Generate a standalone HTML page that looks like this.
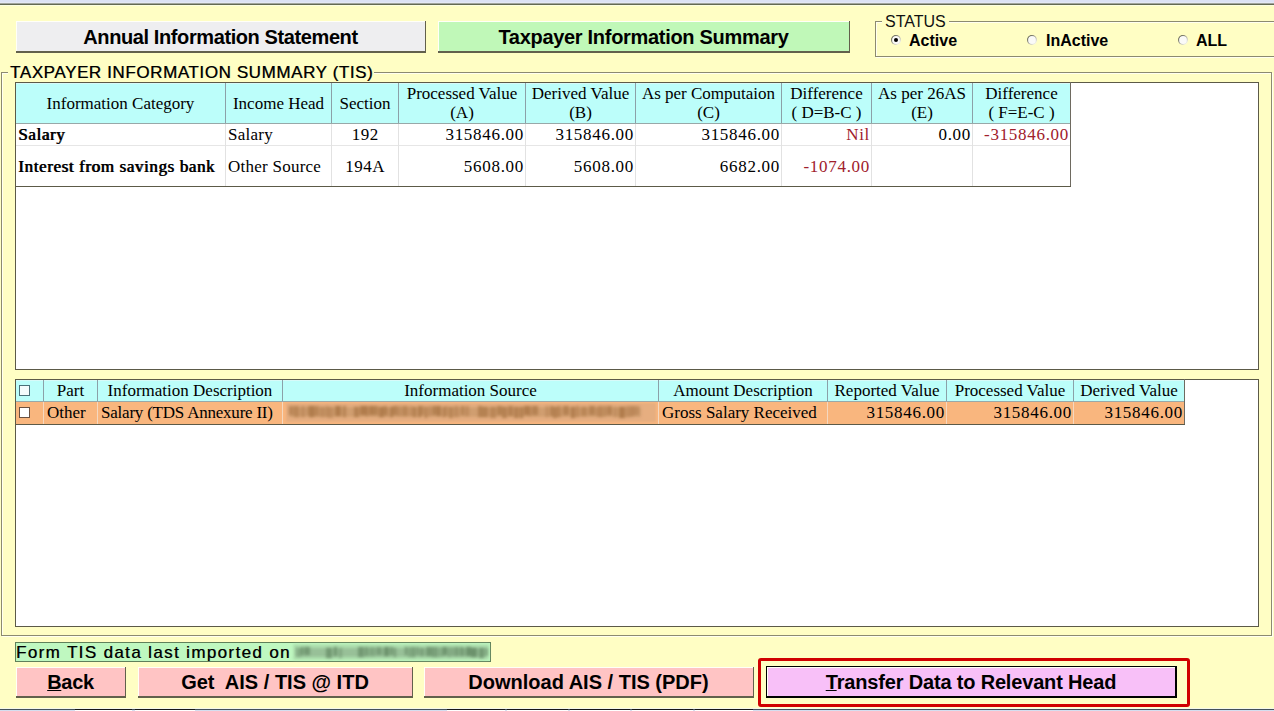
<!DOCTYPE html>
<html><head><meta charset="utf-8">
<style>
*{margin:0;padding:0;box-sizing:border-box}
html,body{width:1274px;height:711px;overflow:hidden;background:#FFFEC4;font-family:"Liberation Sans",sans-serif;color:#000;position:relative}
.a{position:absolute}
.topstrip{left:0;top:0;width:1274px;height:5px;background:linear-gradient(#DCE2F4 0,#DCE2F4 2px,#E4E8F4 2px,#E4E8F4 3px,#A0A49C 3px,#A0A49C 4px,#646A52 4px,#646A52 5px)}
.btn{font-weight:bold;text-align:center;white-space:nowrap;border-right:1px solid #62604C;border-bottom:2px solid #62604C;box-shadow:inset 1px 1px 0 #FFFFF8}
.serif{font-family:"Liberation Serif",serif;font-size:17px}
.c{text-align:center;white-space:nowrap}
.rt{text-align:right;white-space:nowrap}
.gb{border:1px solid #8C8A70;box-shadow:1px 1px 0 #FFFFF0, inset 1px 1px 0 #FFFFF0}
.panel{background:#fff;border:1px solid #5C5A48;}
.hdr{background:#BCFEFA;box-shadow:inset 0 1px 0 #D8FAF8}
.vl{position:absolute;width:1px}
.hl{position:absolute;height:1px}
.t{position:absolute;white-space:nowrap;line-height:1}
u{text-decoration-thickness:1px;text-underline-offset:1px}

</style></head><body>
<div class="a topstrip"></div>
<div class="a" style="left:0;top:5px;width:1274px;height:1px;background:#FCFEE2"></div>
<div class="a btn" style="left:16px;top:21px;width:410px;height:32px;background:#EEEEF0;font-size:20px;letter-spacing:-0.4px;line-height:33px;">Annual Information Statement</div>
<div class="a btn" style="left:438px;top:21px;width:412px;height:32px;background:#C0F8B8;font-size:20px;letter-spacing:-0.3px;line-height:33px;">Taxpayer Information Summary</div>
<div class="a gb" style="left:875px;top:21px;width:420px;height:36px;"></div>
<div class="a t" style="left:882px;top:14px;background:#FFFEC4;padding:0 3px;font-size:16px;color:#111">STATUS</div>
<svg class="a" style="left:890px;top:34px" width="12" height="12" viewBox="0 0 12 12"><defs><linearGradient id="rg896" x1="0" y1="0" x2="1" y2="1"><stop offset="0.15" stop-color="#5C5C4C"/><stop offset="0.85" stop-color="#F4F4EC"/></linearGradient></defs><circle cx="6" cy="6" r="5" fill="url(#rg896)"/><circle cx="6" cy="6" r="3.9" fill="#FAFAF8"/><circle cx="6" cy="6" r="2" fill="#000"/></svg><div class="a t" style="left:909px;top:33px;font-size:16px;font-weight:bold">Active</div>
<svg class="a" style="left:1026px;top:34px" width="12" height="12" viewBox="0 0 12 12"><defs><linearGradient id="rg1032" x1="0" y1="0" x2="1" y2="1"><stop offset="0.15" stop-color="#5C5C4C"/><stop offset="0.85" stop-color="#F4F4EC"/></linearGradient></defs><circle cx="6" cy="6" r="5" fill="url(#rg1032)"/><circle cx="6" cy="6" r="3.9" fill="#FAFAF8"/></svg><div class="a t" style="left:1046px;top:33px;font-size:16px;font-weight:bold">InActive</div>
<svg class="a" style="left:1177px;top:34px" width="12" height="12" viewBox="0 0 12 12"><defs><linearGradient id="rg1183" x1="0" y1="0" x2="1" y2="1"><stop offset="0.15" stop-color="#5C5C4C"/><stop offset="0.85" stop-color="#F4F4EC"/></linearGradient></defs><circle cx="6" cy="6" r="5" fill="url(#rg1183)"/><circle cx="6" cy="6" r="3.9" fill="#FAFAF8"/></svg><div class="a t" style="left:1196px;top:33px;font-size:16px;font-weight:bold">ALL</div>
<div class="a gb" style="left:1px;top:72px;width:1271px;height:564px;"></div>
<div class="a t" style="left:8px;top:64px;background:#FFFEC4;padding:0 1px 0 2px;font-size:17px;letter-spacing:0.6px;text-shadow:0.5px 0 0 rgba(0,0,0,.6)">TAXPAYER INFORMATION SUMMARY (TIS)</div>
<div class="a panel" style="left:15px;top:82px;width:1244px;height:288px;"></div>
<div class="a hdr" style="left:16px;top:83px;width:1054px;height:40px"></div>
<div class="hl" style="left:16px;top:123px;width:1054px;background:#98A8A8"></div>
<div class="hl" style="left:16px;top:145px;width:1054px;background:#E6E6E6"></div>
<div class="vl" style="left:225px;top:83px;height:40px;background:#8CA0A8"></div><div class="vl" style="left:225px;top:124px;height:62px;background:#E2E2E2"></div>
<div class="vl" style="left:331px;top:83px;height:40px;background:#8CA0A8"></div><div class="vl" style="left:331px;top:124px;height:62px;background:#E2E2E2"></div>
<div class="vl" style="left:398px;top:83px;height:40px;background:#8CA0A8"></div><div class="vl" style="left:398px;top:124px;height:62px;background:#E2E2E2"></div>
<div class="vl" style="left:525px;top:83px;height:40px;background:#8CA0A8"></div><div class="vl" style="left:525px;top:124px;height:62px;background:#E2E2E2"></div>
<div class="vl" style="left:635px;top:83px;height:40px;background:#8CA0A8"></div><div class="vl" style="left:635px;top:124px;height:62px;background:#E2E2E2"></div>
<div class="vl" style="left:781px;top:83px;height:40px;background:#8CA0A8"></div><div class="vl" style="left:781px;top:124px;height:62px;background:#E2E2E2"></div>
<div class="vl" style="left:871px;top:83px;height:40px;background:#8CA0A8"></div><div class="vl" style="left:871px;top:124px;height:62px;background:#E2E2E2"></div>
<div class="vl" style="left:972px;top:83px;height:40px;background:#8CA0A8"></div><div class="vl" style="left:972px;top:124px;height:62px;background:#E2E2E2"></div>
<div class="vl" style="left:1070px;top:82px;height:105px;background:#6E6A60"></div>
<div class="hl" style="left:15px;top:186px;width:1056px;background:#5C5A48"></div>
<div class="a serif c" style="left:16px;top:94px;width:209px;height:19px;line-height:19px">Information Category</div>
<div class="a serif c" style="left:226px;top:94px;width:105px;height:19px;line-height:19px">Income Head</div>
<div class="a serif c" style="left:332px;top:94px;width:66px;height:19px;line-height:19px">Section</div>
<div class="a serif c" style="left:399px;top:84px;width:126px;height:19px;line-height:19px">Processed Value</div>
<div class="a serif c" style="left:399px;top:103px;width:126px;height:19px;line-height:19px">(A)</div>
<div class="a serif c" style="left:526px;top:84px;width:109px;height:19px;line-height:19px">Derived Value</div>
<div class="a serif c" style="left:526px;top:103px;width:109px;height:19px;line-height:19px">(B)</div>
<div class="a serif c" style="left:636px;top:84px;width:145px;height:19px;line-height:19px">As per Computaion</div>
<div class="a serif c" style="left:636px;top:103px;width:145px;height:19px;line-height:19px">(C)</div>
<div class="a serif c" style="left:782px;top:84px;width:89px;height:19px;line-height:19px">Difference</div>
<div class="a serif c" style="left:782px;top:103px;width:89px;height:19px;line-height:19px">( D=B-C )</div>
<div class="a serif c" style="left:872px;top:84px;width:100px;height:19px;line-height:19px">As per 26AS</div>
<div class="a serif c" style="left:872px;top:103px;width:100px;height:19px;line-height:19px">(E)</div>
<div class="a serif c" style="left:973px;top:84px;width:97px;height:19px;line-height:19px">Difference</div>
<div class="a serif c" style="left:973px;top:103px;width:97px;height:19px;line-height:19px">( F=E-C )</div>
<div class="a serif" style="left:18px;top:125px;height:19px;line-height:19px;white-space:nowrap;letter-spacing:0.62px;text-shadow:0.8px 0 0 #000;">Salary</div>
<div class="a serif" style="left:228px;top:125px;height:19px;line-height:19px;white-space:nowrap;letter-spacing:0.25px;">Salary</div>
<div class="a serif c" style="left:332px;top:125px;width:66px;height:19px;line-height:19px;letter-spacing:0.5px;text-indent:0.5px;">192</div>
<div class="a serif rt" style="left:398px;top:125px;width:126px;height:19px;line-height:19px;letter-spacing:0.7px;">315846.00</div>
<div class="a serif rt" style="left:525px;top:125px;width:109px;height:19px;line-height:19px;letter-spacing:0.7px;">315846.00</div>
<div class="a serif rt" style="left:635px;top:125px;width:145px;height:19px;line-height:19px;letter-spacing:0.7px;">315846.00</div>
<div class="a serif rt" style="left:781px;top:125px;width:89px;height:19px;line-height:19px;letter-spacing:0.7px;color:#A0202C;">Nil</div>
<div class="a serif rt" style="left:871px;top:125px;width:100px;height:19px;line-height:19px;letter-spacing:0.7px;">0.00</div>
<div class="a serif rt" style="left:972px;top:125px;width:97px;height:19px;line-height:19px;letter-spacing:0.7px;color:#A0202C;">-315846.00</div>
<div class="a serif" style="left:18px;top:157px;height:19px;line-height:19px;white-space:nowrap;letter-spacing:0.62px;text-shadow:0.8px 0 0 #000;">Interest from savings bank</div>
<div class="a serif" style="left:228px;top:157px;height:19px;line-height:19px;white-space:nowrap;letter-spacing:0.25px;">Other Source</div>
<div class="a serif c" style="left:332px;top:157px;width:66px;height:19px;line-height:19px;letter-spacing:0.5px;text-indent:0.5px;">194A</div>
<div class="a serif rt" style="left:398px;top:157px;width:126px;height:19px;line-height:19px;letter-spacing:0.7px;">5608.00</div>
<div class="a serif rt" style="left:525px;top:157px;width:109px;height:19px;line-height:19px;letter-spacing:0.7px;">5608.00</div>
<div class="a serif rt" style="left:635px;top:157px;width:145px;height:19px;line-height:19px;letter-spacing:0.7px;">6682.00</div>
<div class="a serif rt" style="left:781px;top:157px;width:89px;height:19px;line-height:19px;letter-spacing:0.7px;color:#A0202C;">-1074.00</div>
<div class="a panel" style="left:15px;top:379px;width:1244px;height:248px;"></div>
<div class="a hdr" style="left:16px;top:380px;width:1168px;height:21px"></div>
<div class="hl" style="left:16px;top:401px;width:1168px;background:#98A8A8"></div>
<div class="a" style="left:16px;top:402px;width:1168px;height:22px;background:#F9B67E"></div>
<div class="vl" style="left:43px;top:380px;height:21px;background:#8CA0A8"></div><div class="vl" style="left:43px;top:402px;height:22px;background:#F4D8C0"></div>
<div class="vl" style="left:97px;top:380px;height:21px;background:#8CA0A8"></div><div class="vl" style="left:97px;top:402px;height:22px;background:#F4D8C0"></div>
<div class="vl" style="left:282px;top:380px;height:21px;background:#8CA0A8"></div><div class="vl" style="left:282px;top:402px;height:22px;background:#F4D8C0"></div>
<div class="vl" style="left:658px;top:380px;height:21px;background:#8CA0A8"></div><div class="vl" style="left:658px;top:402px;height:22px;background:#F4D8C0"></div>
<div class="vl" style="left:827px;top:380px;height:21px;background:#8CA0A8"></div><div class="vl" style="left:827px;top:402px;height:22px;background:#F4D8C0"></div>
<div class="vl" style="left:946px;top:380px;height:21px;background:#8CA0A8"></div><div class="vl" style="left:946px;top:402px;height:22px;background:#F4D8C0"></div>
<div class="vl" style="left:1073px;top:380px;height:21px;background:#8CA0A8"></div><div class="vl" style="left:1073px;top:402px;height:22px;background:#F4D8C0"></div>
<div class="vl" style="left:1184px;top:379px;height:46px;background:#6E6A60"></div>
<div class="hl" style="left:15px;top:424px;width:1170px;background:#5C5A48"></div>
<div class="a" style="left:19px;top:385px;width:11px;height:11px;background:#F4FCFC;border:1px solid #4A7078"></div><div class="a" style="left:19px;top:407px;width:11px;height:11px;background:#FFFFFF;border:1px solid #6A5040"></div>
<div class="a serif c" style="left:44px;top:381px;width:53px;height:19px;line-height:19px">Part</div>
<div class="a serif c" style="left:98px;top:381px;width:184px;height:19px;line-height:19px">Information Description</div>
<div class="a serif c" style="left:283px;top:381px;width:375px;height:19px;line-height:19px">Information Source</div>
<div class="a serif c" style="left:659px;top:381px;width:168px;height:19px;line-height:19px">Amount Description</div>
<div class="a serif c" style="left:828px;top:381px;width:118px;height:19px;line-height:19px">Reported Value</div>
<div class="a serif c" style="left:947px;top:381px;width:126px;height:19px;line-height:19px">Processed Value</div>
<div class="a serif c" style="left:1074px;top:381px;width:110px;height:19px;line-height:19px">Derived Value</div>
<div class="a serif" style="left:47px;top:403px;height:19px;line-height:19px;white-space:nowrap">Other</div>
<div class="a serif" style="left:101px;top:403px;height:19px;line-height:19px;white-space:nowrap"><span style="letter-spacing:-0.22px">Salary (TDS Annexure II)</span></div>
<div class="a serif" style="left:662px;top:403px;height:19px;line-height:19px;white-space:nowrap">Gross Salary Received</div>
<div class="a serif rt" style="left:827px;top:403px;width:118px;height:19px;line-height:19px;letter-spacing:0.7px">315846.00</div>
<div class="a serif rt" style="left:946px;top:403px;width:126px;height:19px;line-height:19px;letter-spacing:0.7px">315846.00</div>
<div class="a serif rt" style="left:1073px;top:403px;width:110px;height:19px;line-height:19px;letter-spacing:0.7px">315846.00</div>
<div class="a" style="left:286px;top:403px;width:370px;height:19px;background:#E6AE80;filter:blur(1px)"></div>
<div class="a" style="left:289px;top:407px;width:352px;height:10px;background:#D09E70;filter:blur(1.5px)"></div>
<div class="a" style="left:289px;top:406px;width:352px;height:13px;filter:blur(1.6px)"><i style="position:absolute;left:0px;top:0px;width:3px;height:9px;background:#B07C4C;opacity:0.70"></i><i style="position:absolute;left:3px;top:0px;width:2px;height:9px;background:#B07C4C;opacity:0.55"></i><i style="position:absolute;left:5px;top:0px;width:5px;height:11px;background:#B07C4C;opacity:0.70"></i><i style="position:absolute;left:12px;top:0px;width:4px;height:11px;background:#B07C4C;opacity:0.55"></i><i style="position:absolute;left:18px;top:0px;width:2px;height:9px;background:#B07C4C;opacity:0.55"></i><i style="position:absolute;left:20px;top:0px;width:5px;height:11px;background:#B07C4C;opacity:1.00"></i><i style="position:absolute;left:25px;top:0px;width:5px;height:10px;background:#B07C4C;opacity:0.70"></i><i style="position:absolute;left:31px;top:1px;width:5px;height:10px;background:#B07C4C;opacity:0.55"></i><i style="position:absolute;left:37px;top:0px;width:2px;height:11px;background:#B07C4C;opacity:0.70"></i><i style="position:absolute;left:39px;top:1px;width:5px;height:11px;background:#B07C4C;opacity:0.55"></i><i style="position:absolute;left:46px;top:0px;width:6px;height:10px;background:#B07C4C;opacity:1.00"></i><i style="position:absolute;left:54px;top:0px;width:3px;height:11px;background:#B07C4C;opacity:0.85"></i><i style="position:absolute;left:65px;top:1px;width:5px;height:10px;background:#B07C4C;opacity:0.85"></i><i style="position:absolute;left:71px;top:0px;width:6px;height:9px;background:#B07C4C;opacity:1.00"></i><i style="position:absolute;left:77px;top:0px;width:2px;height:10px;background:#B07C4C;opacity:1.00"></i><i style="position:absolute;left:80px;top:0px;width:4px;height:9px;background:#B07C4C;opacity:1.00"></i><i style="position:absolute;left:84px;top:0px;width:5px;height:9px;background:#B07C4C;opacity:0.85"></i><i style="position:absolute;left:90px;top:1px;width:5px;height:10px;background:#B07C4C;opacity:1.00"></i><i style="position:absolute;left:95px;top:0px;width:2px;height:9px;background:#B07C4C;opacity:0.85"></i><i style="position:absolute;left:97px;top:1px;width:2px;height:9px;background:#B07C4C;opacity:0.85"></i><i style="position:absolute;left:101px;top:1px;width:3px;height:10px;background:#B07C4C;opacity:1.00"></i><i style="position:absolute;left:104px;top:0px;width:4px;height:9px;background:#B07C4C;opacity:0.85"></i><i style="position:absolute;left:108px;top:0px;width:4px;height:10px;background:#B07C4C;opacity:0.55"></i><i style="position:absolute;left:113px;top:0px;width:6px;height:10px;background:#B07C4C;opacity:0.70"></i><i style="position:absolute;left:121px;top:0px;width:2px;height:10px;background:#B07C4C;opacity:0.70"></i><i style="position:absolute;left:124px;top:1px;width:3px;height:10px;background:#B07C4C;opacity:1.00"></i><i style="position:absolute;left:129px;top:0px;width:3px;height:11px;background:#B07C4C;opacity:1.00"></i><i style="position:absolute;left:132px;top:0px;width:3px;height:9px;background:#B07C4C;opacity:0.70"></i><i style="position:absolute;left:136px;top:1px;width:2px;height:11px;background:#B07C4C;opacity:1.00"></i><i style="position:absolute;left:139px;top:0px;width:3px;height:10px;background:#B07C4C;opacity:0.55"></i><i style="position:absolute;left:143px;top:0px;width:5px;height:9px;background:#B07C4C;opacity:0.85"></i><i style="position:absolute;left:148px;top:0px;width:4px;height:10px;background:#B07C4C;opacity:1.00"></i><i style="position:absolute;left:154px;top:1px;width:2px;height:10px;background:#B07C4C;opacity:1.00"></i><i style="position:absolute;left:156px;top:0px;width:3px;height:10px;background:#B07C4C;opacity:0.55"></i><i style="position:absolute;left:160px;top:1px;width:2px;height:11px;background:#B07C4C;opacity:0.85"></i><i style="position:absolute;left:162px;top:1px;width:2px;height:11px;background:#B07C4C;opacity:0.70"></i><i style="position:absolute;left:165px;top:0px;width:5px;height:11px;background:#B07C4C;opacity:0.55"></i><i style="position:absolute;left:172px;top:0px;width:3px;height:9px;background:#B07C4C;opacity:0.85"></i><i style="position:absolute;left:176px;top:0px;width:4px;height:10px;background:#B07C4C;opacity:0.55"></i><i style="position:absolute;left:189px;top:0px;width:4px;height:11px;background:#B07C4C;opacity:0.85"></i><i style="position:absolute;left:193px;top:1px;width:6px;height:10px;background:#B07C4C;opacity:0.85"></i><i style="position:absolute;left:201px;top:1px;width:6px;height:11px;background:#B07C4C;opacity:0.70"></i><i style="position:absolute;left:208px;top:0px;width:5px;height:9px;background:#B07C4C;opacity:0.85"></i><i style="position:absolute;left:213px;top:1px;width:5px;height:11px;background:#B07C4C;opacity:0.85"></i><i style="position:absolute;left:219px;top:0px;width:5px;height:10px;background:#B07C4C;opacity:0.85"></i><i style="position:absolute;left:225px;top:1px;width:5px;height:11px;background:#B07C4C;opacity:0.85"></i><i style="position:absolute;left:231px;top:1px;width:3px;height:11px;background:#B07C4C;opacity:1.00"></i><i style="position:absolute;left:235px;top:0px;width:5px;height:9px;background:#B07C4C;opacity:1.00"></i><i style="position:absolute;left:240px;top:0px;width:2px;height:10px;background:#B07C4C;opacity:0.85"></i><i style="position:absolute;left:243px;top:0px;width:6px;height:9px;background:#B07C4C;opacity:0.85"></i><i style="position:absolute;left:257px;top:0px;width:2px;height:11px;background:#B07C4C;opacity:0.70"></i><i style="position:absolute;left:261px;top:0px;width:3px;height:10px;background:#B07C4C;opacity:0.85"></i><i style="position:absolute;left:264px;top:1px;width:4px;height:11px;background:#B07C4C;opacity:0.85"></i><i style="position:absolute;left:268px;top:0px;width:4px;height:11px;background:#B07C4C;opacity:0.70"></i><i style="position:absolute;left:274px;top:0px;width:6px;height:9px;background:#B07C4C;opacity:0.85"></i><i style="position:absolute;left:282px;top:1px;width:4px;height:11px;background:#B07C4C;opacity:1.00"></i><i style="position:absolute;left:287px;top:0px;width:3px;height:11px;background:#B07C4C;opacity:0.70"></i><i style="position:absolute;left:292px;top:1px;width:6px;height:9px;background:#B07C4C;opacity:0.70"></i><i style="position:absolute;left:300px;top:0px;width:6px;height:9px;background:#B07C4C;opacity:0.85"></i><i style="position:absolute;left:307px;top:1px;width:2px;height:9px;background:#B07C4C;opacity:0.55"></i><i style="position:absolute;left:309px;top:0px;width:5px;height:11px;background:#B07C4C;opacity:0.70"></i><i style="position:absolute;left:315px;top:0px;width:2px;height:10px;background:#B07C4C;opacity:0.85"></i><i style="position:absolute;left:318px;top:0px;width:5px;height:9px;background:#B07C4C;opacity:0.85"></i><i style="position:absolute;left:325px;top:1px;width:3px;height:10px;background:#B07C4C;opacity:0.55"></i><i style="position:absolute;left:330px;top:1px;width:6px;height:11px;background:#B07C4C;opacity:1.00"></i><i style="position:absolute;left:337px;top:0px;width:5px;height:11px;background:#B07C4C;opacity:0.55"></i><i style="position:absolute;left:342px;top:0px;width:3px;height:10px;background:#B07C4C;opacity:0.70"></i><i style="position:absolute;left:345px;top:0px;width:5px;height:9px;background:#B07C4C;opacity:0.55"></i></div>
<div class="a" style="left:15px;top:642px;width:476px;height:20px;background:#BFF8C0;border:1px solid #60805A"></div>
<div class="a t" style="left:16px;top:644px;font-size:17px;letter-spacing:1.36px;text-shadow:0.5px 0 0 rgba(0,0,0,.6)">Form TIS data last imported on</div>
<div class="a" style="left:293px;top:644px;width:196px;height:16px;background:#A8D8A8;filter:blur(1.5px);opacity:.7"></div>
<div class="a" style="left:296px;top:648px;width:190px;height:9px;background:#98C098;filter:blur(1.5px)"></div>
<div class="a" style="left:296px;top:647px;width:190px;height:12px;filter:blur(1.5px)"><i style="position:absolute;left:0px;top:0px;width:2px;height:10px;background:#6C926C;opacity:0.55"></i><i style="position:absolute;left:3px;top:1px;width:2px;height:9px;background:#6C926C;opacity:0.55"></i><i style="position:absolute;left:5px;top:0px;width:2px;height:8px;background:#6C926C;opacity:1.00"></i><i style="position:absolute;left:8px;top:0px;width:6px;height:8px;background:#6C926C;opacity:0.85"></i><i style="position:absolute;left:30px;top:1px;width:6px;height:10px;background:#6C926C;opacity:0.85"></i><i style="position:absolute;left:38px;top:0px;width:3px;height:9px;background:#6C926C;opacity:1.00"></i><i style="position:absolute;left:43px;top:1px;width:3px;height:10px;background:#6C926C;opacity:0.55"></i><i style="position:absolute;left:62px;top:0px;width:6px;height:10px;background:#6C926C;opacity:0.85"></i><i style="position:absolute;left:69px;top:0px;width:3px;height:9px;background:#6C926C;opacity:0.85"></i><i style="position:absolute;left:73px;top:0px;width:6px;height:9px;background:#6C926C;opacity:0.55"></i><i style="position:absolute;left:80px;top:0px;width:6px;height:8px;background:#6C926C;opacity:0.70"></i><i style="position:absolute;left:88px;top:0px;width:5px;height:9px;background:#6C926C;opacity:1.00"></i><i style="position:absolute;left:94px;top:0px;width:3px;height:8px;background:#6C926C;opacity:0.85"></i><i style="position:absolute;left:98px;top:1px;width:2px;height:9px;background:#6C926C;opacity:0.85"></i><i style="position:absolute;left:109px;top:0px;width:2px;height:8px;background:#6C926C;opacity:1.00"></i><i style="position:absolute;left:112px;top:0px;width:5px;height:10px;background:#6C926C;opacity:0.55"></i><i style="position:absolute;left:117px;top:0px;width:2px;height:10px;background:#6C926C;opacity:0.85"></i><i style="position:absolute;left:120px;top:0px;width:3px;height:8px;background:#6C926C;opacity:0.70"></i><i style="position:absolute;left:124px;top:1px;width:4px;height:8px;background:#6C926C;opacity:0.70"></i><i style="position:absolute;left:130px;top:0px;width:6px;height:9px;background:#6C926C;opacity:0.85"></i><i style="position:absolute;left:136px;top:0px;width:6px;height:10px;background:#6C926C;opacity:0.70"></i><i style="position:absolute;left:143px;top:0px;width:2px;height:10px;background:#6C926C;opacity:0.55"></i><i style="position:absolute;left:146px;top:0px;width:2px;height:9px;background:#6C926C;opacity:0.85"></i><i style="position:absolute;left:148px;top:0px;width:3px;height:8px;background:#6C926C;opacity:1.00"></i><i style="position:absolute;left:152px;top:0px;width:2px;height:10px;background:#6C926C;opacity:0.70"></i><i style="position:absolute;left:155px;top:0px;width:2px;height:9px;background:#6C926C;opacity:0.70"></i><i style="position:absolute;left:158px;top:0px;width:5px;height:9px;background:#6C926C;opacity:0.70"></i><i style="position:absolute;left:164px;top:0px;width:3px;height:9px;background:#6C926C;opacity:0.85"></i><i style="position:absolute;left:167px;top:1px;width:2px;height:8px;background:#6C926C;opacity:0.55"></i><i style="position:absolute;left:170px;top:0px;width:5px;height:9px;background:#6C926C;opacity:1.00"></i><i style="position:absolute;left:175px;top:1px;width:6px;height:9px;background:#6C926C;opacity:1.00"></i><i style="position:absolute;left:183px;top:1px;width:5px;height:10px;background:#6C926C;opacity:0.85"></i><i style="position:absolute;left:189px;top:1px;width:3px;height:8px;background:#6C926C;opacity:0.70"></i></div>
<div class="a btn" style="left:16px;top:667px;width:110px;height:31px;background:#FFC4C4;font-size:20px;letter-spacing:-0.3px;line-height:30px;"><u>B</u>ack</div>
<div class="a btn" style="left:138px;top:667px;width:275px;height:31px;background:#FFC4C4;font-size:20px;line-height:30px;">Get&nbsp; AIS / TIS @ ITD</div>
<div class="a btn" style="left:424px;top:667px;width:330px;height:31px;background:#FFC4C4;font-size:20px;line-height:30px;">Download AIS / TIS (PDF)</div>
<div class="a" style="left:758px;top:658px;width:432px;height:49px;border:3px solid #D00000;border-radius:3px"></div>
<div class="a btn" style="left:766px;top:666px;width:411px;height:32px;background:#F8C0F8;font-size:20px;letter-spacing:-0.17px;line-height:30px;border:1px solid #000;border-right:2px solid #000;border-bottom:2px solid #000"><u>T</u>ransfer Data to Relevant Head</div>
<div class="a" style="left:0;top:708px;width:1274px;height:1px;background:#F4F8EC"></div>
<div class="a" style="left:0;top:709px;width:1274px;height:1px;background:#44505A"></div>
<div class="a" style="left:0;top:710px;width:1274px;height:1px;background:#D4DEF0"></div>
<div class="a" style="left:75px;top:709px;width:57px;height:1px;background:#181818"></div><div class="a" style="left:75px;top:710px;width:57px;height:1px;background:#FFFFFF"></div>
<div class="a" style="left:135px;top:709px;width:60px;height:1px;background:#181818"></div><div class="a" style="left:135px;top:710px;width:60px;height:1px;background:#FFFFFF"></div>
<div class="a" style="left:447px;top:709px;width:58px;height:1px;background:#181818"></div><div class="a" style="left:447px;top:710px;width:58px;height:1px;background:#FFFFFF"></div>
<div class="a" style="left:507px;top:709px;width:61px;height:1px;background:#181818"></div><div class="a" style="left:507px;top:710px;width:61px;height:1px;background:#FFFFFF"></div>
<div class="a" style="left:570px;top:709px;width:60px;height:1px;background:#181818"></div><div class="a" style="left:570px;top:710px;width:60px;height:1px;background:#FFFFFF"></div>
<div class="a" style="left:632px;top:709px;width:61px;height:1px;background:#181818"></div><div class="a" style="left:632px;top:710px;width:61px;height:1px;background:#FFFFFF"></div>
<div class="a" style="left:695px;top:709px;width:58px;height:1px;background:#181818"></div><div class="a" style="left:695px;top:710px;width:58px;height:1px;background:#FFFFFF"></div>
</body></html>
